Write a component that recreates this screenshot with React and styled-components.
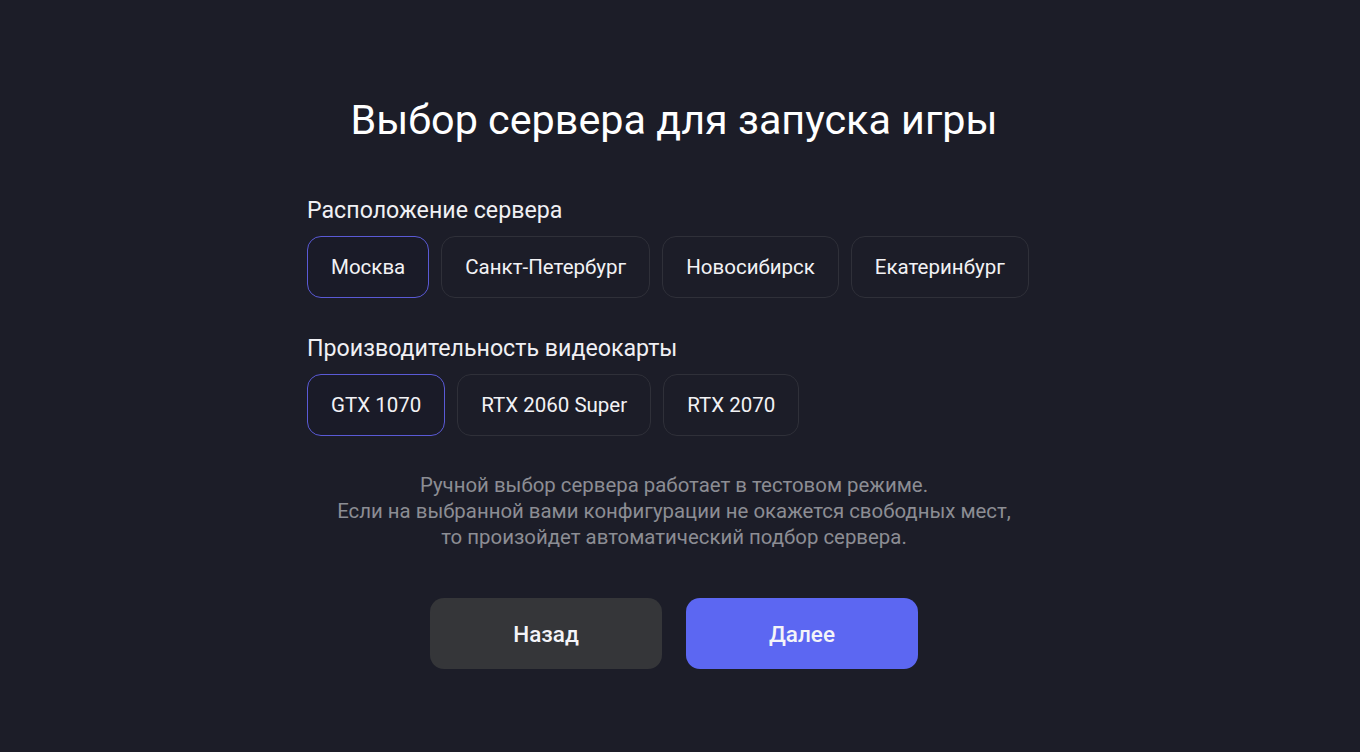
import React, { useState } from 'react';
import styled, { createGlobalStyle } from 'styled-components';

const GlobalStyle = createGlobalStyle`
  html, body {
    margin: 0;
    padding: 0;
    background: #1c1d28;
  }
  body {
    font-family: Roboto, "Noto Sans", sans-serif;
    color: #f2f2f5;
  }
`;

const locations = ['Москва', 'Санкт-Петербург', 'Новосибирск', 'Екатеринбург'];
const gpus = ['GTX 1070', 'RTX 2060 Super', 'RTX 2070'];

export default function App() {
  const [location, setLocation] = useState('Москва');
  const [gpu, setGpu] = useState('GTX 1070');

  return (
    <>
      <GlobalStyle />
      <Page>
        <Content>
          <Title>Выбор сервера для запуска игры</Title>

          <Section>
            <Label>Расположение сервера</Label>
            <Options>
              {locations.map((item) => (
                <Chip key={item} $active={item === location} onClick={() => setLocation(item)}>
                  {item}
                </Chip>
              ))}
            </Options>
          </Section>

          <Section>
            <Label>Производительность видеокарты</Label>
            <Options>
              {gpus.map((item) => (
                <Chip key={item} $active={item === gpu} onClick={() => setGpu(item)}>
                  {item}
                </Chip>
              ))}
            </Options>
          </Section>

          <Note>
            Ручной выбор сервера работает в тестовом режиме.
            <br />
            Если на выбранной вами конфигурации не окажется свободных мест,
            <br />
            то произойдет автоматический подбор сервера.
          </Note>

          <Actions>
            <Button>Назад</Button>
            <Button $primary>Далее</Button>
          </Actions>
        </Content>
      </Page>
    </>
  );
}

const Page = styled.div`
  width: 1348px;
  height: 752px;
  display: flex;
  justify-content: center;
  padding-top: 94px;
  box-sizing: border-box;
`;

const Content = styled.div`
  width: 734px;
  display: flex;
  flex-direction: column;
`;

const Title = styled.h1`
  margin: 0 0 50px;
  text-align: center;
  font-size: 41.3px;
  font-weight: 400;
  line-height: 52px;
  color: #ffffff;
`;

const Section = styled.div`
  display: flex;
  flex-direction: column;
  gap: 12px;

  & + & {
    margin-top: 36px;
  }
`;

const Label = styled.div`
  font-size: 23.2px;
  line-height: 28px;
  color: #f0f0f4;
`;

const Options = styled.div`
  display: flex;
  gap: 12px;
`;

const Chip = styled.button`
  height: 62px;
  padding: 0 23px;
  border-radius: 14px;
  border: 1.5px solid ${(p) => (p.$active ? '#5a5ad6' : '#2f3039')};
  background: ${(p) => (p.$active ? '#1a1b28' : '#1c1d28')};
  color: #f2f2f5;
  font-family: Roboto, sans-serif;
  font-size: 20.5px;
  cursor: pointer;
`;

const Note = styled.p`
  margin: 36px 0 48px;
  text-align: center;
  font-size: 20.4px;
  line-height: 26px;
  color: #8c8d94;
`;

const Actions = styled.div`
  display: flex;
  justify-content: center;
  gap: 24px;
`;

const Button = styled.button`
  width: 232px;
  height: 71px;
  border: none;
  border-radius: 14px;
  background: ${(p) => (p.$primary ? '#5c67f2' : '#353639')};
  color: #f4f4f8;
  font-family: Roboto, sans-serif;
  font-size: 22.5px;
  font-weight: 500;
  cursor: pointer;
`;
